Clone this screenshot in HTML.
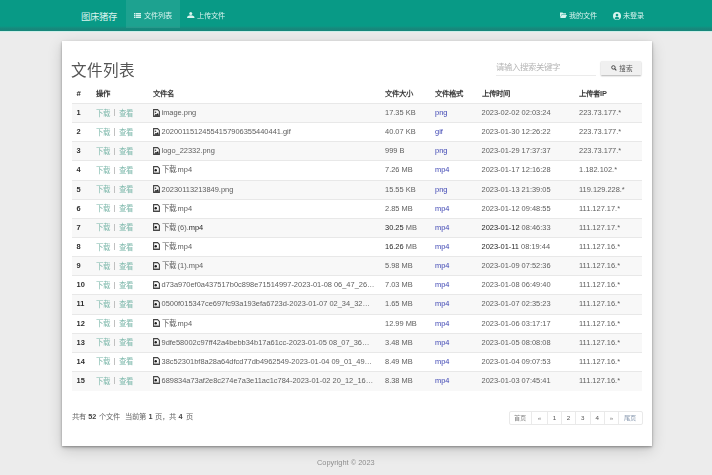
<!DOCTYPE html>
<html lang="zh-CN"><head><meta charset="utf-8">
<style>
*{margin:0;padding:0;box-sizing:border-box}
html,body{width:712px;height:475px;overflow:hidden;background:#ececec;font-family:"Liberation Sans",sans-serif;color:#333}
.nav{position:absolute;left:0;top:0;width:712px;height:30.5px;background:linear-gradient(#089a86 0,#089a86 26px,#138f80 27.5px,#17877b 29px,#17877b 30.5px);color:#fff}
.fr{position:absolute;left:0;top:30.5px;width:712px;height:1.5px;background:#cdefe9}
.brand{position:absolute;left:80.5px;top:9px;font-size:9.4px;line-height:15.5px;color:#d8f3ee}
.ni{position:absolute;top:0;height:27.5px;font-size:7.2px;line-height:31.5px;color:#d8f3ee;white-space:nowrap}
.ni.act{background:rgba(255,255,255,.085)}
.ni svg{position:absolute}
.card{position:absolute;left:62px;top:41px;width:590px;height:405px;background:#fff;box-shadow:0 1px 2px rgba(0,0,0,.3),0 2px 5px rgba(0,0,0,.14),0 4px 14px rgba(0,0,0,.16)}
.title{position:absolute;left:71px;top:61px;font-size:15.6px;line-height:20px;color:#555}
.search{position:absolute;left:496px;top:59px;width:100px;height:17px;border-bottom:1px solid #ebebeb;font-size:8.4px;line-height:16px;color:#b4b4b4}
.btn{position:absolute;left:601px;top:61px;width:40px;height:14px;background:#f0f0f0;box-shadow:0 1px 1.5px rgba(0,0,0,.3);font-size:7.2px;line-height:14px;color:#555}
.th{position:absolute;top:85px;height:19px;left:72px;width:570px;border-bottom:1px solid #d9d9d9;font-size:7.4px;line-height:17px;font-weight:bold;color:#3a3a3a}
.th span,.row span{position:absolute;top:0;white-space:nowrap}
.row{position:absolute;left:72px;width:570px;height:19.64px;border-top:1px solid #e8e8e8;font-size:7.45px;line-height:18px;color:#606060}
.d{font-weight:normal;color:#262626}
.row:nth-child(5){border-top:none}
.row.odd{background:#f8f8f8}
.c0{left:4.5px} .c1{left:24px} .c2{left:81px} .c3{left:313px} .c4{left:363px} .c5{left:409.5px} .c6{left:507px}
.row .c0{font-weight:bold;color:#2e2e2e}
.c1 a{color:#7db8ab;position:absolute;top:0.6px} .l1{left:0} .l2{left:23px} .c1 i{position:absolute;left:18.4px;top:5.3px;width:1px;height:7.2px;background:#c0c0c0}
a.f{color:#3f47b4}
.fi{vertical-align:-1.5px;margin-right:1.5px}
.info{position:absolute;left:72px;top:410.5px;font-size:7.3px;line-height:12px;color:#666}
.info b{font-weight:bold;color:#444} .info span,.info b{position:absolute;top:0;white-space:nowrap}
.pg{position:absolute;top:410.5px;height:14px;left:508.5px;display:flex;border:1px solid #e9e9e9;border-radius:2px}
.pg span{display:block;height:12px;font-size:6.2px;line-height:12.5px;color:#858585;border-left:1px solid #eaeaea;text-align:center}
.pg span:first-child{border-left:none}
.foot{position:absolute;left:317px;top:456.8px;font-size:7.4px;line-height:12px;color:#8c8c8c}
.wrap{position:absolute;left:0;top:0;width:712px;height:475px;filter:blur(0.3px)}
</style></head><body><div class="wrap">
<div class="nav">
 <div class="brand">图床猪存</div>
 <div class="ni act" style="left:126px;width:54px">
  <svg style="left:7.5px;top:12.5px" width="7" height="5.5" viewBox="0 0 14 11"><path d="M0 0h3v3H0zM4 0h10v3H4zM0 4h3v3H0zM4 4h10v3H4zM0 8h3v3H0zM4 8h10v3H4z" fill="#d8f3ee"/></svg>
  <span style="position:absolute;left:17.5px">文件列表</span></div>
 <div class="ni" style="left:186px;width:46px">
  <svg style="left:1px;top:12px" width="7.5" height="6" viewBox="0 0 15 12"><circle cx="7.5" cy="3" r="3" fill="#d8f3ee"/><path d="M0 12c0-4 3-5.5 7.5-5.5S15 8 15 12z" fill="#d8f3ee"/></svg>
  <span style="position:absolute;left:10.5px">上传文件</span></div>
 <div class="ni" style="left:559px;width:44px">
  <svg style="left:0.5px;top:12px" width="7" height="6" viewBox="0 0 14 12"><path d="M0 1h5l1.5 1.5H12V5H3L0 12z" fill="#d8f3ee"/><path d="M3.2 6H14l-3 6H0.5z" fill="#d8f3ee"/></svg>
  <span style="position:absolute;left:9.5px">我的文件</span></div>
 <div class="ni" style="left:612px;width:40px">
  <svg style="left:1px;top:12px" width="8" height="8" viewBox="0 0 16 16"><circle cx="8" cy="8" r="8" fill="#d8f3ee"/><circle cx="8" cy="6" r="2.6" fill="#089a86"/><path d="M3.2 13c0.8-2.5 2.6-3.5 4.8-3.5s4 1 4.8 3.5c-1.3 1.2-3 2-4.8 2s-3.5-0.8-4.8-2z" fill="#089a86"/></svg>
  <span style="position:absolute;left:10.5px">未登录</span></div>
</div>
<div class="fr"></div>
<div class="card"></div>
<div class="title">文件列表</div>
<div class="search">请输入搜索关键字</div>
<div class="btn"><svg style="position:absolute;left:10.2px;top:4px" width="5.8" height="5.8" viewBox="0 0 12 12"><circle cx="5" cy="5" r="3.6" fill="none" stroke="#444" stroke-width="2"/><path d="M7.5 7.5L11 11" stroke="#444" stroke-width="2.4"/></svg><span style="position:absolute;left:18px;font-size:6.7px;top:0.5px">搜索</span></div>
<div class="th"><span class="c0" style="font-size:7.8px;color:#222">#</span><span class="c1">操作</span><span class="c2">文件名</span><span class="c3">文件大小</span><span class="c4">文件格式</span><span class="c5">上传时间</span><span class="c6">上传者IP</span></div>
<div class="row odd" style="top:103.00px"><span class="c0">1</span><span class="c1"><a class="l1">下载</a><i></i><a class="l2">查看</a></span><span class="c2"><svg class="fi" viewBox="0 0 14 16" width="7" height="8"><path d="M1.2 1.2h8l3.6 3.6v10H1.2z" fill="none" stroke="#444" stroke-width="2.2"/><circle cx="5" cy="6.5" r="1.6" fill="#333"/><path d="M2.5 13.5l3.2-4 1.6 1.6 2.6-3.3 2 5.7z" fill="#222"/></svg>image.png</span><span class="c3">17.35 KB</span><span class="c4"><a class="f">png</a></span><span class="c5">2023-02-02 02:03:24</span><span class="c6">223.73.177.*</span></div>
<div class="row" style="top:122.14px"><span class="c0">2</span><span class="c1"><a class="l1">下载</a><i></i><a class="l2">查看</a></span><span class="c2"><svg class="fi" viewBox="0 0 14 16" width="7" height="8"><path d="M1.2 1.2h8l3.6 3.6v10H1.2z" fill="none" stroke="#444" stroke-width="2.2"/><circle cx="5" cy="6.5" r="1.6" fill="#333"/><path d="M2.5 13.5l3.2-4 1.6 1.6 2.6-3.3 2 5.7z" fill="#222"/></svg>20200115124554157906355440441.gif</span><span class="c3">40.07 KB</span><span class="c4"><a class="f">gif</a></span><span class="c5">2023-01-30 12:26:22</span><span class="c6">223.73.177.*</span></div>
<div class="row odd" style="top:141.28px"><span class="c0">3</span><span class="c1"><a class="l1">下载</a><i></i><a class="l2">查看</a></span><span class="c2"><svg class="fi" viewBox="0 0 14 16" width="7" height="8"><path d="M1.2 1.2h8l3.6 3.6v10H1.2z" fill="none" stroke="#444" stroke-width="2.2"/><circle cx="5" cy="6.5" r="1.6" fill="#333"/><path d="M2.5 13.5l3.2-4 1.6 1.6 2.6-3.3 2 5.7z" fill="#222"/></svg>logo_22332.png</span><span class="c3">999 B</span><span class="c4"><a class="f">png</a></span><span class="c5">2023-01-29 17:37:37</span><span class="c6">223.73.177.*</span></div>
<div class="row" style="top:160.42px"><span class="c0">4</span><span class="c1"><a class="l1">下载</a><i></i><a class="l2">查看</a></span><span class="c2"><svg class="fi" viewBox="0 0 14 16" width="7" height="8"><path d="M1.2 1.2h8l3.6 3.6v10H1.2z" fill="none" stroke="#444" stroke-width="2.2"/><circle cx="5.5" cy="8.5" r="2.4" fill="#1a1a1a"/><rect x="2" y="11.8" width="10" height="1.6" fill="#999"/></svg>下载.mp4</span><span class="c3">7.26 MB</span><span class="c4"><a class="f">mp4</a></span><span class="c5">2023-01-17 12:16:28</span><span class="c6">1.182.102.*</span></div>
<div class="row odd" style="top:179.56px"><span class="c0">5</span><span class="c1"><a class="l1">下载</a><i></i><a class="l2">查看</a></span><span class="c2"><svg class="fi" viewBox="0 0 14 16" width="7" height="8"><path d="M1.2 1.2h8l3.6 3.6v10H1.2z" fill="none" stroke="#444" stroke-width="2.2"/><circle cx="5" cy="6.5" r="1.6" fill="#333"/><path d="M2.5 13.5l3.2-4 1.6 1.6 2.6-3.3 2 5.7z" fill="#222"/></svg>20230113213849.png</span><span class="c3">15.55 KB</span><span class="c4"><a class="f">png</a></span><span class="c5">2023-01-13 21:39:05</span><span class="c6">119.129.228.*</span></div>
<div class="row" style="top:198.70px"><span class="c0">6</span><span class="c1"><a class="l1">下载</a><i></i><a class="l2">查看</a></span><span class="c2"><svg class="fi" viewBox="0 0 14 16" width="7" height="8"><path d="M1.2 1.2h8l3.6 3.6v10H1.2z" fill="none" stroke="#444" stroke-width="2.2"/><circle cx="5.5" cy="8.5" r="2.4" fill="#1a1a1a"/><rect x="2" y="11.8" width="10" height="1.6" fill="#999"/></svg>下载.mp4</span><span class="c3">2.85 MB</span><span class="c4"><a class="f">mp4</a></span><span class="c5">2023-01-12 09:48:55</span><span class="c6">111.127.17.*</span></div>
<div class="row odd" style="top:217.84px"><span class="c0">7</span><span class="c1"><a class="l1">下载</a><i></i><a class="l2">查看</a></span><span class="c2"><svg class="fi" viewBox="0 0 14 16" width="7" height="8"><path d="M1.2 1.2h8l3.6 3.6v10H1.2z" fill="none" stroke="#444" stroke-width="2.2"/><circle cx="5.5" cy="8.5" r="2.4" fill="#1a1a1a"/><rect x="2" y="11.8" width="10" height="1.6" fill="#999"/></svg>下载 (6).<b class=d>mp4</b></span><span class="c3"><b class=d>30.25</b> MB</span><span class="c4"><a class="f">mp4</a></span><span class="c5"><b class=d>2023-01-12</b> 08:46:33</span><span class="c6">111.127.17.*</span></div>
<div class="row" style="top:236.98px"><span class="c0">8</span><span class="c1"><a class="l1">下载</a><i></i><a class="l2">查看</a></span><span class="c2"><svg class="fi" viewBox="0 0 14 16" width="7" height="8"><path d="M1.2 1.2h8l3.6 3.6v10H1.2z" fill="none" stroke="#444" stroke-width="2.2"/><circle cx="5.5" cy="8.5" r="2.4" fill="#1a1a1a"/><rect x="2" y="11.8" width="10" height="1.6" fill="#999"/></svg>下载.mp4</span><span class="c3"><b class=d>16.26</b> MB</span><span class="c4"><a class="f">mp4</a></span><span class="c5"><b class=d>2023-01-11</b> 08:19:44</span><span class="c6">111.127.16.*</span></div>
<div class="row odd" style="top:256.12px"><span class="c0">9</span><span class="c1"><a class="l1">下载</a><i></i><a class="l2">查看</a></span><span class="c2"><svg class="fi" viewBox="0 0 14 16" width="7" height="8"><path d="M1.2 1.2h8l3.6 3.6v10H1.2z" fill="none" stroke="#444" stroke-width="2.2"/><circle cx="5.5" cy="8.5" r="2.4" fill="#1a1a1a"/><rect x="2" y="11.8" width="10" height="1.6" fill="#999"/></svg>下载 (1).mp4</span><span class="c3">5.98 MB</span><span class="c4"><a class="f">mp4</a></span><span class="c5">2023-01-09 07:52:36</span><span class="c6">111.127.16.*</span></div>
<div class="row" style="top:275.26px"><span class="c0">10</span><span class="c1"><a class="l1">下载</a><i></i><a class="l2">查看</a></span><span class="c2"><svg class="fi" viewBox="0 0 14 16" width="7" height="8"><path d="M1.2 1.2h8l3.6 3.6v10H1.2z" fill="none" stroke="#444" stroke-width="2.2"/><circle cx="5.5" cy="8.5" r="2.4" fill="#1a1a1a"/><rect x="2" y="11.8" width="10" height="1.6" fill="#999"/></svg>d73a970ef0a437517b0c898e71514997-2023-01-08 06_47_26…</span><span class="c3">7.03 MB</span><span class="c4"><a class="f">mp4</a></span><span class="c5">2023-01-08 06:49:40</span><span class="c6">111.127.16.*</span></div>
<div class="row odd" style="top:294.40px"><span class="c0">11</span><span class="c1"><a class="l1">下载</a><i></i><a class="l2">查看</a></span><span class="c2"><svg class="fi" viewBox="0 0 14 16" width="7" height="8"><path d="M1.2 1.2h8l3.6 3.6v10H1.2z" fill="none" stroke="#444" stroke-width="2.2"/><circle cx="5.5" cy="8.5" r="2.4" fill="#1a1a1a"/><rect x="2" y="11.8" width="10" height="1.6" fill="#999"/></svg>0500f015347ce697fc93a193efa6723d-2023-01-07 02_34_32…</span><span class="c3">1.65 MB</span><span class="c4"><a class="f">mp4</a></span><span class="c5">2023-01-07 02:35:23</span><span class="c6">111.127.16.*</span></div>
<div class="row" style="top:313.54px"><span class="c0">12</span><span class="c1"><a class="l1">下载</a><i></i><a class="l2">查看</a></span><span class="c2"><svg class="fi" viewBox="0 0 14 16" width="7" height="8"><path d="M1.2 1.2h8l3.6 3.6v10H1.2z" fill="none" stroke="#444" stroke-width="2.2"/><circle cx="5.5" cy="8.5" r="2.4" fill="#1a1a1a"/><rect x="2" y="11.8" width="10" height="1.6" fill="#999"/></svg>下载.mp4</span><span class="c3">12.99 MB</span><span class="c4"><a class="f">mp4</a></span><span class="c5">2023-01-06 03:17:17</span><span class="c6">111.127.16.*</span></div>
<div class="row odd" style="top:332.68px"><span class="c0">13</span><span class="c1"><a class="l1">下载</a><i></i><a class="l2">查看</a></span><span class="c2"><svg class="fi" viewBox="0 0 14 16" width="7" height="8"><path d="M1.2 1.2h8l3.6 3.6v10H1.2z" fill="none" stroke="#444" stroke-width="2.2"/><circle cx="5.5" cy="8.5" r="2.4" fill="#1a1a1a"/><rect x="2" y="11.8" width="10" height="1.6" fill="#999"/></svg>9dfe58002c97ff42a4bebb34b17a61cc-2023-01-05 08_07_36…</span><span class="c3">3.48 MB</span><span class="c4"><a class="f">mp4</a></span><span class="c5">2023-01-05 08:08:08</span><span class="c6">111.127.16.*</span></div>
<div class="row" style="top:351.82px"><span class="c0">14</span><span class="c1"><a class="l1">下载</a><i></i><a class="l2">查看</a></span><span class="c2"><svg class="fi" viewBox="0 0 14 16" width="7" height="8"><path d="M1.2 1.2h8l3.6 3.6v10H1.2z" fill="none" stroke="#444" stroke-width="2.2"/><circle cx="5.5" cy="8.5" r="2.4" fill="#1a1a1a"/><rect x="2" y="11.8" width="10" height="1.6" fill="#999"/></svg>38c52301bf8a28a64dfcd77db4962549-2023-01-04 09_01_49…</span><span class="c3">8.49 MB</span><span class="c4"><a class="f">mp4</a></span><span class="c5">2023-01-04 09:07:53</span><span class="c6">111.127.16.*</span></div>
<div class="row odd" style="top:370.96px"><span class="c0">15</span><span class="c1"><a class="l1">下载</a><i></i><a class="l2">查看</a></span><span class="c2"><svg class="fi" viewBox="0 0 14 16" width="7" height="8"><path d="M1.2 1.2h8l3.6 3.6v10H1.2z" fill="none" stroke="#444" stroke-width="2.2"/><circle cx="5.5" cy="8.5" r="2.4" fill="#1a1a1a"/><rect x="2" y="11.8" width="10" height="1.6" fill="#999"/></svg>689834a73af2e8c274e7a3e11ac1c784-2023-01-02 20_12_16…</span><span class="c3">8.38 MB</span><span class="c4"><a class="f">mp4</a></span><span class="c5">2023-01-03 07:45:41</span><span class="c6">111.127.16.*</span></div>
<div class="info"><span style="left:0px">共有</span><b style="left:16.299999999999997px">52</b><span style="left:27px">个文件</span><span style="left:52.5px">当前第</span><b style="left:76.4px">1</b><span style="left:83.19999999999999px">页，</span><span style="left:96.69999999999999px">共</span><b style="left:106.6px">4</b><span style="left:113.6px">页</span></div>
<div class="pg"><span style="width:21.5px">首页</span><span style="width:16px">«</span><span style="width:14px;color:#555">1</span><span style="width:14px;color:#555">2</span><span style="width:14.5px;color:#555">3</span><span style="width:14.5px;color:#555">4</span><span style="width:14px">»</span><span style="width:23.5px;color:#8a9ab0">尾页</span></div>
<div class="foot">Copyright © 2023</div>
</div></body></html>
